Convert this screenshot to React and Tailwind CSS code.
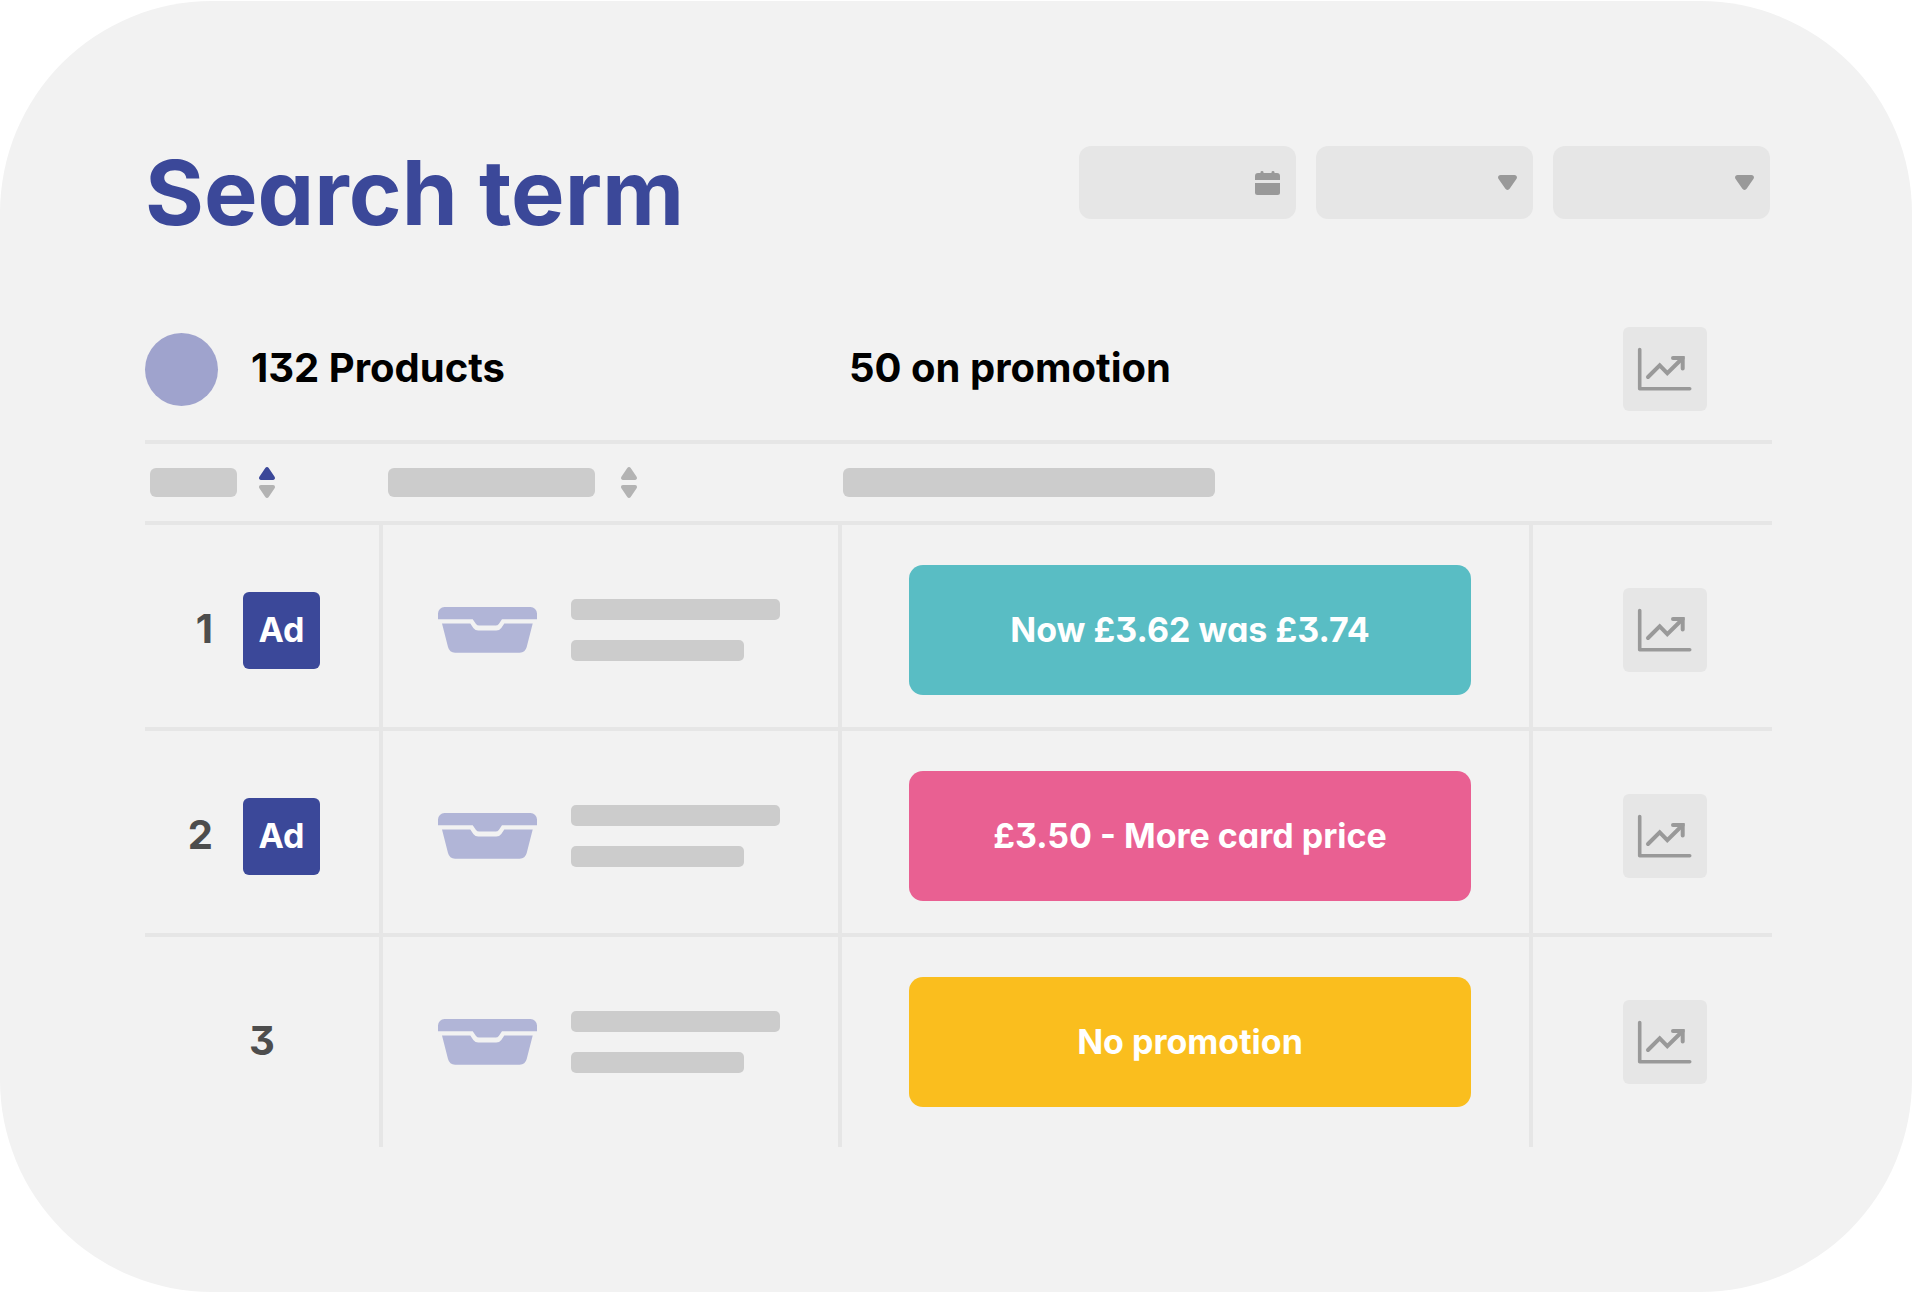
import React from "react";

const rows = [
	{ rank: 1, ad: true, promo: "Now £3.62 was £3.74", color: "bg-[#59bdc4]" },
	{ rank: 2, ad: true, promo: "£3.50 - More card price", color: "bg-[#e96092]" },
	{ rank: 3, ad: false, promo: "No promotion", color: "bg-[#fabe1e]" },
];

const CalendarIcon = () => (
	<svg width="25" height="24" viewBox="0 0 25 24" fill="#999999" aria-hidden="true">
		<path d="M0 9V5a3 3 0 0 1 3-3h2.500V1.300a1.500 1.300 0 0 1 3 0V2h8V1.300a1.500 1.300 0 0 1 3 0V2H22a3 3 0 0 1 3 3v4z" />
		<path d="M0 12h25v9.500a2.500 2.500 0 0 1-2.500 2.500h-20A2.500 2.500 0 0 1 0 21.500z" />
	</svg>
);

const CaretIcon = () => (
	<svg
		width="19"
		height="15"
		viewBox="0 0 19 15"
		fill="#999999"
		aria-hidden="true"
		className="pointer-events-none col-start-1 row-start-1 mr-4 self-center justify-self-end"
	>
		<path d="M2.600 0h13.800c2.200 0 3.300 2.300 2 4l-6.600 9.600c-1.100 1.700-3.500 1.700-4.600 0L.6 4C-.7 2.300.4 0 2.600 0z" />
	</svg>
);

const SortIcon = ({ active }) => (
	<svg width="16" height="31" viewBox="0 0 16 31" fill="#b3b3b3" aria-hidden="true">
		<path
			d="M6.300 1c.8-1.300 2.600-1.300 3.400 0l5.900 8.800c.9 1.400.2 3.200-1.500 3.200H1.900C.2 13-.5 11.200.4 9.800z"
			fill={active ? "#3b4899" : "#b3b3b3"}
		/>
		<path d="M6.300 30c.8 1.300 2.600 1.300 3.400 0l5.900-8.800c.9-1.400.2-3.200-1.500-3.200H1.900C.2 18-.5 19.800.4 21.200z" />
	</svg>
);

const LunchBoxIcon = () => (
	<svg width="99" height="46" viewBox="0 0 99 46" fill="#b1b5d7" aria-hidden="true">
		<path d="M0 12.300V6.500A6.500 6.500 0 0 1 6.500 0h86A6.500 6.500 0 0 1 99 6.500v5.800H64l-3.200 4.600q-1.200 1.500-3.200 1.500H41.200q-2 0-3.200-1.500l-3.300-4.600z" />
		<path d="M4 16.600h28.300l3 4.300q2 2.500 5 2.500h18q3 0 5-2.500l3-4.300h28.400l-6 23.400q-1.500 5.700-7 5.700H17q-5.500 0-7-5.700z" />
	</svg>
);

const ChartButton = ({ label }) => (
	<button
		type="button"
		aria-label={label}
		className="block size-[84px] shrink-0 rounded-md bg-[#e6e6e6]"
	>
		<svg width="84" height="84" viewBox="0 0 84 84" fill="none" stroke="#999999" strokeLinecap="round">
			<path d="M16.700 22.500v39.200h50" strokeWidth="3.600" strokeLinejoin="round" />
			<path d="M25 50l11.700-11.600 7.600 7.800L59.700 31" strokeWidth="4" />
			<path d="M50 31h9.700v10.500" strokeWidth="4" />
		</svg>
	</button>
);

const FilterSelect = ({ label }) => (
	<div className="grid w-[217px]">
		<select
			aria-label={label}
			className="col-start-1 row-start-1 h-[73px] w-full appearance-none rounded-xl bg-[#e6e6e6]"
		>
			<option value=""></option>
		</select>
		<CaretIcon />
	</div>
);

const App = () => {
	return (
		<div className="bg-white pr-1 pt-px font-[Inter,sans-serif] [font-feature-settings:'cv11','cv09']">
			<main className="rounded-[212px] bg-[#f2f2f2] pb-[145px] pl-[145px] pr-[140px] pt-36">
				<header className="flex items-start justify-between pr-0.5">
					<h1 className="text-[90px] font-bold leading-[96px] text-[#3b4899]">
						Search term
					</h1>
					<div className="mt-px flex gap-5">
						<button
							type="button"
							aria-label="Date"
							className="flex h-[73px] w-[217px] items-center justify-end rounded-xl bg-[#e6e6e6] pr-4"
						>
							<CalendarIcon />
						</button>
						<FilterSelect label="Retailer" />
						<FilterSelect label="Category" />
					</div>
				</header>

				<section className="mt-[86px] grid grid-cols-[704px_1fr_auto] items-center pr-[65px] text-[40px] font-bold leading-[48px] text-black">
					<div className="flex items-center gap-[33px]">
						<span className="size-[73px] rounded-full bg-[#9fa3cd]"></span>
						<p className="pb-0.5">132 Products</p>
					</div>
					<p className="pb-0.5">50 on promotion</p>
					<ChartButton label="All products chart" />
				</section>

				<table className="mt-[29px] w-full table-fixed border-separate border-spacing-0 text-left">
					<thead>
						<tr className="h-[81px] *:border-t-4 *:border-[#e6e6e6] *:p-0">
							<th aria-label="Rank" className="w-[234px]">
								<div className="flex items-center gap-[22px] pl-[5px]">
									<span className="h-[29px] w-[87px] rounded-md bg-[#cccccc]"></span>
									<button type="button" aria-label="Sort by rank">
										<SortIcon active />
									</button>
								</div>
							</th>
							<th aria-label="Product" className="w-[459px]">
								<div className="flex items-center gap-[26px] pl-[9px]">
									<span className="h-[29px] w-[207px] rounded-md bg-[#cccccc]"></span>
									<button type="button" aria-label="Sort by product">
										<SortIcon />
									</button>
								</div>
							</th>
							<th aria-label="Promotion">
								<div className="ml-[5px] h-[29px] w-[372px] rounded-md bg-[#cccccc]"></div>
							</th>
							<th aria-label="Chart" className="w-[243px]"></th>
						</tr>
					</thead>
					<tbody>
						{rows.map((row) => (
							<tr
								key={row.rank}
								className="*:border-l-4 *:border-t-4 *:border-[#e6e6e6] *:pb-8 *:pt-10 *:first:border-l-0 last:*:pb-10"
							>
								<td>
									<div
										className={`flex items-center gap-[30px] ${
											row.ad ? "justify-end pr-[59px]" : "justify-center"
										}`}
									>
										<span className="pb-0.5 text-[40px] font-bold leading-[48px] text-[#4d4d4d]">
											{row.rank}
										</span>
										{row.ad && (
											<span className="flex size-[77px] items-center justify-center rounded-md bg-[#3b4899] pb-0.5 text-[34px] font-bold text-white">
												Ad
											</span>
										)}
									</div>
								</td>
								<td>
									<div className="flex items-center gap-[34px] pl-[55px]">
										<LunchBoxIcon />
										<div className="flex flex-col gap-5">
											<span className="h-[21px] w-[209px] rounded-[5px] bg-[#cccccc]"></span>
											<span className="h-[21px] w-[173px] rounded-[5px] bg-[#cccccc]"></span>
										</div>
									</div>
								</td>
								<td>
									<div
										className={`ml-[67px] mr-[58px] flex h-[130px] items-center justify-center rounded-[14px] pb-0.5 text-[34px] font-bold text-white ${row.color}`}
									>
										{row.promo}
									</div>
								</td>
								<td>
									<div className="pl-[90px]">
										<ChartButton label={`Product ${row.rank} chart`} />
									</div>
								</td>
							</tr>
						))}
					</tbody>
				</table>
			</main>
		</div>
	);
};

export default App;
